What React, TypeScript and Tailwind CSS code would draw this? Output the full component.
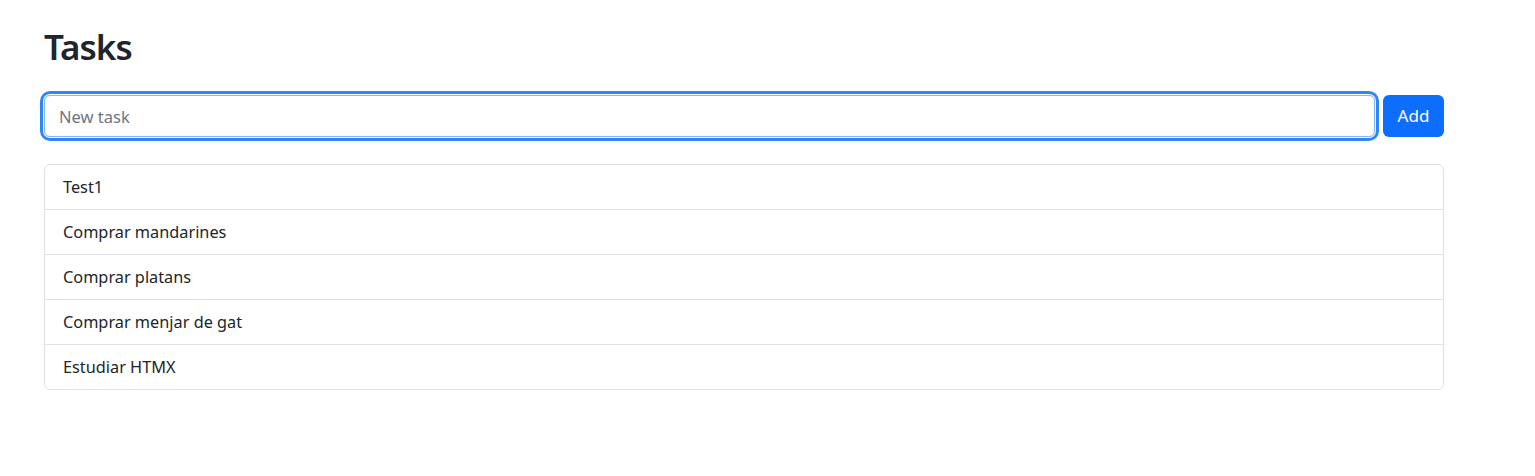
import { useState } from 'react';

const tasks = ['Test1', 'Comprar mandarines', 'Comprar platans', 'Comprar menjar de gat', 'Estudiar HTMX'];

function App() {
  const [text, setText] = useState('');

  return (
    <div className="min-h-screen bg-white text-[#212529]" style={{ fontFamily: '"Segoe UI", "Noto Sans", sans-serif' }}>
      <div className="w-[1400px] ml-[44px] pt-6">
        <h1 className="text-[35px] leading-[46px] font-semibold tracking-[-1px] mb-[25px]">Tasks</h1>

        <form className="flex gap-2" onSubmit={(e) => e.preventDefault()}>
          <input
            autoFocus
            value={text}
            onChange={(e) => setText(e.target.value)}
            placeholder="New task"
            className="flex-1 h-[42px] px-[14px] text-[16.5px] rounded-[6px] border border-[#86b7fe] ring-[3px] ring-[#2f86f6] ring-offset-1 outline-none placeholder:text-[#6c757d]"
          />
          <button className="w-[61px] h-[42px] rounded-[6px] bg-[#0d6efd] text-white text-[17px]">Add</button>
        </form>

        <ul className="mt-[27px] border border-[#dee2e6] rounded-[6px]">
          {tasks.map((t, i) => (
            <li
              key={t}
              className={`flex items-center px-[18px] text-[16.3px] ${i > 0 ? 'h-[45px] border-t border-[#dee2e6]' : 'h-[44px]'}`}
            >
              {t}
            </li>
          ))}
        </ul>
      </div>
    </div>
  );
}

export default App;
